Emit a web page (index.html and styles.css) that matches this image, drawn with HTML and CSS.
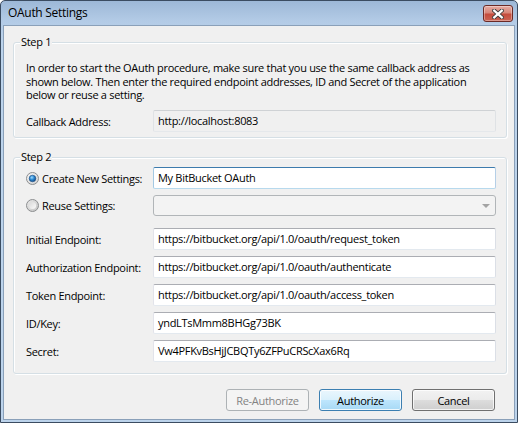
FILE: index.html
```html
<!DOCTYPE html>
<html>
<head>
<meta charset="utf-8">
<title>OAuth Settings</title>
<link rel="stylesheet" href="styles.css">
</head>
<body>
<div class="window">
  <div class="titlebar">
    <span class="title">OAuth Settings</span>
    <div class="close">
      <svg width="12" height="10" viewBox="0 0 12 10">
        <path d="M2.2 1.6 L9.8 8.4 M9.8 1.6 L2.2 8.4" stroke="#3a3a3a" stroke-width="4" stroke-linecap="square" fill="none"/>
        <path d="M2.2 1.6 L9.8 8.4 M9.8 1.6 L2.2 8.4" stroke="#ffffff" stroke-width="2.2" stroke-linecap="square" fill="none"/>
      </svg>
    </div>
  </div>
  <div class="client">
    <div class="group g1">
      <div class="legend">Step 1</div>
      <p class="intro">In order to start the OAuth procedure, make sure that you use the same callback address as<br>shown below. Then enter the required endpoint addresses, ID and Secret of the application<br>below or reuse a setting.</p>
      <div class="row first">
        <span class="label">Callback Address:</span>
        <div class="field readonly">http://localhost:8083</div>
      </div>
    </div>

    <div class="group g2">
      <div class="legend">Step 2</div>
      <div class="row r-create">
        <span class="label radio">
          <svg class="rb" width="13" height="13" viewBox="0 0 13 13">
            <defs>
              <linearGradient id="rg1" x1="0" y1="0" x2="1" y2="1">
                <stop offset="0" stop-color="#f6f6f6"/>
                <stop offset="1" stop-color="#cfcfcf"/>
              </linearGradient>
              <radialGradient id="dot" cx="0.4" cy="0.35" r="0.75">
                <stop offset="0" stop-color="#9fdcff"/>
                <stop offset="0.45" stop-color="#2b88d2"/>
                <stop offset="1" stop-color="#0c3a70"/>
              </radialGradient>
            </defs>
            <circle cx="6.5" cy="6.5" r="6" fill="url(#rg1)" stroke="#8c8e90"/>
            <circle cx="6.5" cy="6.5" r="3.3" fill="url(#dot)" stroke="#1d4f86" stroke-width="0.6"/>
          </svg>
          Create New Settings:
        </span>
        <div class="field focused">My BitBucket OAuth</div>
      </div>
      <div class="row r-reuse">
        <span class="label radio">
          <svg class="rb" width="13" height="13" viewBox="0 0 13 13">
            <defs>
              <linearGradient id="rg2" x1="0" y1="0" x2="1" y2="1">
                <stop offset="0" stop-color="#e9e9e9"/>
                <stop offset="1" stop-color="#c4c4c4"/>
              </linearGradient>
              <linearGradient id="rg3" x1="0" y1="0" x2="1" y2="1">
                <stop offset="0" stop-color="#d8d8d8"/>
                <stop offset="1" stop-color="#fbfbfb"/>
              </linearGradient>
            </defs>
            <circle cx="6.5" cy="6.5" r="6" fill="url(#rg2)" stroke="#8c8e90"/>
            <circle cx="6.5" cy="6.5" r="3.6" fill="url(#rg3)"/>
          </svg>
          Reuse Settings:
        </span>
        <div class="combo"><span class="arrow"></span></div>
      </div>
      <div class="row r-ep">
        <span class="label">Initial Endpoint:</span>
        <div class="field">https://bitbucket.org/api/1.0/oauth/request_token</div>
      </div>
      <div class="row r-next">
        <span class="label">Authorization Endpoint:</span>
        <div class="field">https://bitbucket.org/api/1.0/oauth/authenticate</div>
      </div>
      <div class="row r-next">
        <span class="label">Token Endpoint:</span>
        <div class="field">https://bitbucket.org/api/1.0/oauth/access_token</div>
      </div>
      <div class="row r-next">
        <span class="label">ID/Key:</span>
        <div class="field">yndLTsMmm8BHGg73BK</div>
      </div>
      <div class="row r-next">
        <span class="label">Secret:</span>
        <div class="field">Vw4PFKvBsHjJCBQTy6ZFPuCRScXax6Rq</div>
      </div>
    </div>

    <div class="buttons">
      <div class="btn disabled">Re-Authorize</div>
      <div class="btn default">Authorize</div>
      <div class="btn">Cancel</div>
    </div>
  </div>
</div>
</body>
</html>
```

FILE: styles.css
```css
* { box-sizing: border-box; }
html, body { margin: 0; padding: 0; }
body {
  width: 518px;
  height: 423px;
  overflow: hidden;
  background: #ffffff;
  font-family: "Open Sans", sans-serif;
  font-size: 11px;
  letter-spacing: -0.3px;
  color: #000;
}
.window {
  width: 518px;
  height: 423px;
  border: 1px solid #3b4c61;
  border-radius: 5px 5px 0 0;
  background: linear-gradient(#9db8d7 0px, #b3cbe6 20px, #bcd3eb 40px, #bcd3eb 100%);
  display: flex;
  flex-direction: column;
  overflow: hidden;
}
.titlebar {
  height: 24px;
  flex: none;
  display: flex;
  align-items: flex-start;
  padding-left: 7px;
}
.title {
  line-height: 24px;
  font-size: 12px;
}
.close {
  margin-left: auto;
  margin-top: 4px;
  margin-right: 4px;
  width: 30px;
  height: 17px;
  border: 1px solid #6b2a26;
  border-radius: 3px;
  background: linear-gradient(#e6aba3 0%, #d78679 45%, #c54c3d 55%, #cb6454 100%);
  box-shadow: inset 0 0 0 1px rgba(255,255,255,0.35);
  display: flex;
  align-items: center;
  justify-content: center;
}
.client {
  flex: 1;
  margin: 0 2px 2px 2px;
  border: 1px solid #8aa0b9;
  background: #f0f0f0;
  padding: 16px 7px 0 9px;
  display: flex;
  flex-direction: column;
}
.group {
  border: 1px solid #d5dfe5;
  border-radius: 3px;
  box-shadow: inset 1px 1px 0 #ffffff, 1px 1px 0 #ffffff;
  padding: 0 10px 5px 12px;
  display: flex;
  flex-direction: column;
}
.g2 {
  margin-top: 19px;
  padding-bottom: 11px;
}
.legend {
  margin-top: -8px;
  margin-left: -6px;
  padding: 0 1px;
  width: fit-content;
  line-height: 14px;
  background: #f0f0f0;
}
.intro {
  margin: 12px 0 0 0;
  line-height: 13.5px;
  white-space: nowrap;
}
.row {
  display: flex;
  align-items: center;
}
.row.first { margin-top: 8.5px; }
.r-create { margin-top: 3px; }
.r-reuse { margin-top: 6px; }
.r-ep { margin-top: 12px; }
.r-next { margin-top: 6px; }
.label {
  width: 127px;
  flex: none;
}
.radio {
  display: flex;
  align-items: center;
  gap: 3px;
}
.rb { flex: none; }
.field {
  flex: 1;
  height: 22px;
  line-height: 20px;
  padding: 0 4px;
  background: #ffffff;
  border: 1px solid;
  border-color: #abadb3 #dbdfe6 #e3e9ef #e2e3ea;
  border-radius: 2px;
  white-space: nowrap;
  overflow: hidden;
}
.field.readonly {
  background: #f0f0f0;
  border-color: #cfd2d5 #dfe2e5 #e5e8eb #dfe2e5;
}
.field.focused {
  border-color: #3d7bad #b5cfe7 #b7d9ed #a4c9e3;
}
.combo {
  flex: 1;
  height: 21px;
  border: 1px solid #b1b5b8;
  border-radius: 3px;
  background: #f3f3f3;
  display: flex;
  align-items: center;
  justify-content: flex-end;
  padding-right: 5px;
}
.arrow {
  width: 0;
  height: 0;
  border-left: 4px solid transparent;
  border-right: 4px solid transparent;
  border-top: 4px solid #a3a3a3;
}
.buttons {
  margin-top: 15px;
  margin-right: 12px;
  display: flex;
  justify-content: flex-end;
  gap: 10px;
}
.btn {
  width: 83px;
  height: 22px;
  border: 1px solid #707070;
  border-radius: 3px;
  background: linear-gradient(#f2f2f2 0%, #ebebeb 50%, #dddddd 50%, #cfcfcf 100%);
  box-shadow: inset 0 0 0 1px rgba(255,255,255,0.75);
  display: flex;
  align-items: center;
  justify-content: center;
}
.btn.disabled {
  border-color: #adb2b5;
  background: #f4f4f4;
  box-shadow: none;
  color: #838383;
}
.btn.default {
  border-color: #3c7fb1;
  background: linear-gradient(#eaf6fd 0%, #d9f0fc 50%, #bee6fd 50%, #a7d9f5 100%);
  box-shadow: inset 0 0 0 1px rgba(255,255,255,0.8);
}
```
